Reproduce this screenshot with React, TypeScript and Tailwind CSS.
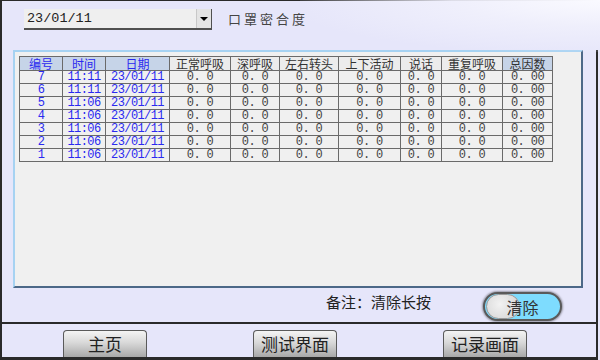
import React from "react";

const cols = [
  { name: "编号", w: "w-[43px]", blue: true },
  { name: "时间", w: "w-[43px]", blue: true },
  { name: "日期", w: "w-[64px]", blue: true },
  { name: "正常呼吸", w: "w-[61px]", blue: false },
  { name: "深呼吸", w: "w-[49px]", blue: false },
  { name: "左右转头", w: "w-[59px]", blue: false },
  { name: "上下活动", w: "w-[62px]", blue: false },
  { name: "说话", w: "w-[41px]", blue: false },
  { name: "重复呼吸", w: "w-[61px]", blue: false },
  { name: "总因数", w: "w-[50px]", blue: false, bluebg: true },
];

const rows = [
  ["7", "11:11"],
  ["6", "11:11"],
  ["5", "11:06"],
  ["4", "11:06"],
  ["3", "11:06"],
  ["2", "11:06"],
  ["1", "11:06"],
];

const cjk = "font-['Noto_Sans_CJK_SC',sans-serif]";

function NavButton({ label, className }: { label: string; className: string }) {
  return (
    <div
      className={`h-[27px] w-[84px] rounded-t-[4px] border border-b-0 border-[#5a5a5a] bg-[linear-gradient(to_bottom,#f4f4f4,#d8d8d8_45%,#a8a8a8)] flex items-center justify-center text-[17px] text-[#222] ${cjk} ${className}`}
    >
      {label}
    </div>
  );
}

export default function App() {
  return (
    <div className="w-[600px] h-[360px] relative overflow-hidden bg-[#e6e6fa]">
      <div className="h-full w-[598px] flex flex-col border-l-2 border-t border-b-[3px] border-[#2a2a2a]">
        {/* top row */}
        <div className="h-[49px] flex items-start pt-[8px] pl-[22px]">
          <div className="w-[188px] h-[21px] flex bg-[#efefef] border-b-2 border-r border-[#505050]">
            <div className="flex-1 pl-[3px] leading-[20px] text-[13.5px] text-[#222] font-['Liberation_Mono',monospace]">
              23/01/11
            </div>
            <div className="w-[15px] h-full flex items-center justify-center bg-[#e4e4e4] border-l border-[#c8c8c8]">
              <div className="w-0 h-0 border-l-[4px] border-r-[4px] border-t-[4px] border-l-transparent border-r-transparent border-t-black" />
            </div>
          </div>
          <div className={`ml-[16px] mt-[1px] text-[13px] leading-[17px] tracking-[3px] text-[#444] ${cjk}`}>
            口罩密合度
          </div>
        </div>

        <div className="flex-1 flex flex-col border-r-2 border-[#2a2a2a]">
          {/* panel */}
          <div className="ml-[11px] w-[570px] h-[238px] bg-[#f0f0f0] border-l-2 border-t-2 border-l-[#a6d2f2] border-t-[#a6d2f2] border-r-2 border-b-2 border-r-[#4c6888] border-b-[#4c6888] pl-[4px] pt-[4px]">
            <table className="table-fixed border-collapse w-[534px]">
              <thead>
                <tr>
                  {cols.map((c) => (
                    <th
                      key={c.name}
                      className={`${c.w} h-[14px] p-0 border border-[#6a6a6a] text-[12px] leading-[12px] font-normal text-center whitespace-nowrap ${cjk} ${
                        c.blue ? "text-[#2a2af0] bg-[#c6d4e8]" : c.bluebg ? "text-[#333] bg-[#c6d4e8]" : "text-[#333] bg-[#ececec]"
                      }`}
                    >
                      {c.name}
                    </th>
                  ))}
                </tr>
              </thead>
              <tbody>
                {rows.map((r) => (
                  <tr key={r[0]}>
                    {[r[0], r[1], "23/01/11", "0. 0", "0. 0", "0. 0", "0. 0", "0. 0", "0. 0", "0. 00"].map((v, i) => (
                      <td
                        key={i}
                        className={`h-[13px] p-0 border border-[#6a6a6a] text-center text-[12px] leading-[12px] tracking-[-0.6px] whitespace-nowrap font-['Liberation_Mono',monospace] ${
                          i < 3 ? "text-[#2a2af0]" : "text-[#444]"
                        }`}
                      >
                        {v}
                      </td>
                    ))}
                  </tr>
                ))}
              </tbody>
            </table>
          </div>

          {/* note row */}
          <div className="h-[34px] flex items-start">
            <div className={`ml-[324px] w-[157px] mt-[4px] text-[15px] leading-[20px] text-[#222] ${cjk}`}>
              备注：清除长按
            </div>
            <div className="mt-[4px] w-[79px] h-[29px] rounded-full border-2 border-[#5a5a5a] bg-[#7edcfe] shadow-[0_0_2px_1px_rgba(0,0,0,0.35)] relative flex items-center justify-center overflow-hidden">
              <div className="absolute left-[1px] top-[0px] w-[34px] h-[25px] rounded-full bg-[radial-gradient(circle_at_40%_40%,#f2f2f2,#d0d0d0)] border border-[#9a9a9a]" />
              <span className={`relative text-[16px] text-[#333] ${cjk}`}>清除</span>
            </div>
          </div>

          <div className="h-[2px] bg-[#2a2a2a]" />

          {/* buttons row */}
          <div className="flex-1 flex items-start pt-[6px]">
            <NavButton label="主页" className="ml-[61px]" />
            <NavButton label="测试界面" className="ml-[106px]" />
            <NavButton label="记录画面" className="ml-[106px]" />
          </div>
        </div>
      </div>
      {/* top-right glare */}
      <div className="absolute top-0 right-0 w-[300px] h-[52px] pointer-events-none bg-[radial-gradient(ellipse_at_top_right,rgba(250,250,255,1)_0%,rgba(240,240,252,0.9)_35%,rgba(230,230,250,0)_75%)]" />
    </div>
  );
}
